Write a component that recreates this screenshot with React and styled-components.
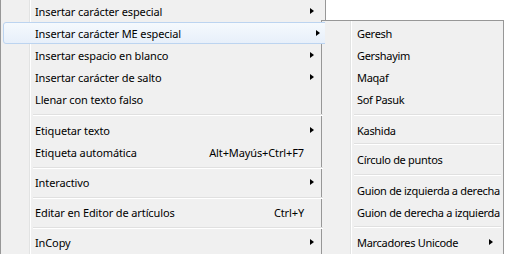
import React from "react";
import styled, { createGlobalStyle } from "styled-components";

const Global = createGlobalStyle`
  html, body { margin: 0; padding: 0; background: #ffffff; }
  body { width: 505px; height: 254px; overflow: hidden; }
  #root { position: relative; width: 505px; height: 254px; overflow: hidden; }
`;

const Menu = styled.div`
  position: ${(p) => (p.$sub ? "absolute" : "relative")};
  left: ${(p) => (p.$sub ? "321px" : "auto")};
  top: ${(p) => (p.$sub ? "20px" : "auto")};
  width: ${(p) => (p.$sub ? "183px" : "326px")};
  height: ${(p) => (p.$sub ? "234px" : "254px")};
  box-sizing: border-box;
  background: #f0f0f0;
  border: 1px solid #979797;
  border-top: ${(p) => (p.$sub ? "1px solid #979797" : "none")};
  border-bottom: none;
  padding: ${(p) => (p.$sub ? "1px 2px 0" : "0 2px")};
  font-family: "Noto Sans", "Open Sans", sans-serif;
  font-size: 11px;
  letter-spacing: ${(p) => (p.$sub ? "-0.3px" : "-0.12px")};
  color: #000;
  display: flex;
  flex-direction: column;
  overflow: hidden;
  &::before {
    content: "";
    position: absolute;
    top: 0;
    bottom: 0;
    left: 28px;
    width: 1px;
    background: #e2e3e3;
    border-right: 1px solid #ffffff;
  }
`;

const Row = styled.div`
  position: relative;
  height: 22px;
  flex: none;
  display: flex;
  align-items: center;
  box-sizing: border-box;
  padding-left: ${(p) => (p.$sub ? "32px" : "31px")};
  padding-right: ${(p) => (p.$sub ? "7px" : "8px")};
  border: 1px solid transparent;
  border-radius: 3px;
  margin-right: ${(p) => (p.$hl ? "-6px" : "0")};
  ${(p) =>
    p.$hl &&
    `
    border-color: #bcd4f0;
    background: linear-gradient(#f5f9fd, #e7effa);
  `}
  z-index: 1;
`;

const Label = styled.span`
  flex: 1;
  white-space: nowrap;
`;

const Shortcut = styled.span`
  white-space: nowrap;
  margin-right: 10px;
`;

const Arrow = styled.span`
  width: 0;
  height: 0;
  border-top: 3.5px solid transparent;
  border-bottom: 3.5px solid transparent;
  border-left: 4px solid #000;
`;

const Sep = styled.div`
  position: relative;
  flex: none;
  height: ${(p) => p.$h}px;
  margin-left: 30px;
  z-index: 1;
  &::after {
    content: "";
    position: absolute;
    left: 0;
    right: 0;
    top: ${(p) => p.$line}px;
    height: 1px;
    background: #e0e0e0;
    border-bottom: 1px solid #ffffff;
  }
`;

const main = [
  { t: "Insertar carácter especial", a: true },
  { t: "Insertar carácter ME especial", a: true, hl: true },
  { t: "Insertar espacio en blanco", a: true },
  { t: "Insertar carácter de salto", a: true },
  { t: "Llenar con texto falso" },
  { sep: 9, line: 4 },
  { t: "Etiquetar texto", a: true },
  { t: "Etiqueta automática", s: "Alt+Mayús+Ctrl+F7" },
  { sep: 8, line: 4 },
  { t: "Interactivo", a: true },
  { sep: 8, line: 4 },
  { t: "Editar en Editor de artículos", s: "Ctrl+Y" },
  { sep: 8, line: 4 },
  { t: "InCopy", a: true },
];

const sub = [
  { t: "Geresh" },
  { t: "Gershayim" },
  { t: "Maqaf" },
  { t: "Sof Pasuk" },
  { sep: 9, line: 4 },
  { t: "Kashida" },
  { sep: 7, line: 2 },
  { t: "Círculo de puntos" },
  { sep: 9, line: 4 },
  { t: "Guion de izquierda a derecha" },
  { t: "Guion de derecha a izquierda" },
  { sep: 8, line: 3 },
  { t: "Marcadores Unicode", a: true },
];

function Items({ list, isSub }) {
  return list.map((it, i) =>
    it.sep ? (
      <Sep key={i} $h={it.sep} $line={it.line} />
    ) : (
      <Row key={i} $hl={it.hl} $sub={isSub}>
        <Label>{it.t}</Label>
        {it.s && <Shortcut>{it.s}</Shortcut>}
        {it.a && <Arrow />}
      </Row>
    )
  );
}

export default function App() {
  return (
    <>
      <Global />
      <Menu>
        <Items list={main} />
      </Menu>
      <Menu $sub>
        <Items list={sub} isSub />
      </Menu>
    </>
  );
}
